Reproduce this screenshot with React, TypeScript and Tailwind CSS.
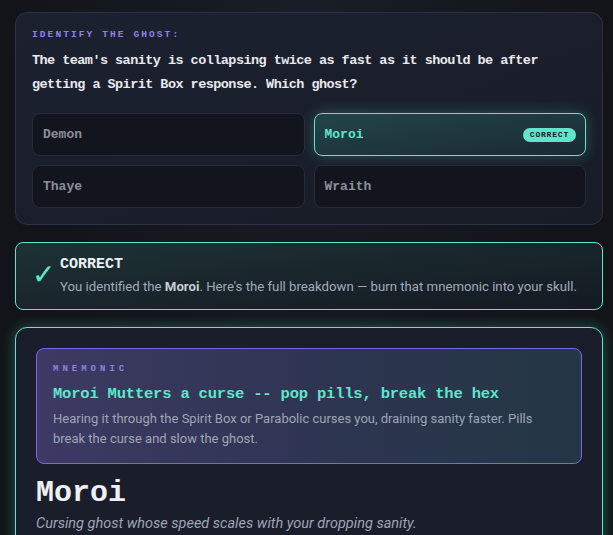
const typewriter = { fontFamily: '"Liberation Mono", "DejaVu Sans Mono", monospace' };
const sans = { fontFamily: 'Roboto, "Noto Sans", sans-serif' };

const options = [
  { name: 'Demon', correct: false },
  { name: 'Moroi', correct: true },
  { name: 'Thaye', correct: false },
  { name: 'Wraith', correct: false },
];

export default function App() {
  return (
    <div
      className="h-screen overflow-hidden bg-[radial-gradient(ellipse_at_top,#1a1d27_0%,#121419_70%)] pl-[15px] pr-[10px] pt-3 pb-6 flex flex-col gap-[17px]"
      style={sans}
    >
      {/* question card */}
      <div className="shrink-0 rounded-xl border border-[#2c3245] bg-gradient-to-br from-[#1c2130] to-[#181c26] px-4 pt-4 pb-4">
        <div
          className="text-[9.5px] font-bold tracking-[2.1px] uppercase text-[#8f80e8] leading-3"
          style={typewriter}
        >
          Identify the ghost:
        </div>
        <p
          className="mt-2 text-[13.5px] font-bold leading-6 tracking-[-0.55px] text-[#e9e9ee]"
          style={typewriter}
        >
          The team's sanity is collapsing twice as fast as it should be after getting a Spirit Box response. Which ghost?
        </p>
        <div className="mt-4 grid grid-cols-2 gap-[9px]">
          {options.map((o) =>
            o.correct ? (
              <div
                key={o.name}
                className="h-[43px] rounded-lg border border-[#5ee6cb] bg-gradient-to-br from-[#24444a] to-[#1a2a33] shadow-[0_0_14px_rgba(94,230,203,0.28)] flex items-center justify-between pl-[10px] pr-[9px]"
              >
                <span className="text-[13px] font-bold text-[#5ee6cb]" style={typewriter}>
                  {o.name}
                </span>
                <span
                  className="rounded-full bg-[#5ee6cb] px-[7px] py-[2px] text-[8px] font-bold tracking-[0.8px] text-[#10221f] leading-[10px]"
                  style={typewriter}
                >
                  CORRECT
                </span>
              </div>
            ) : (
              <div
                key={o.name}
                className="h-[43px] rounded-lg border border-[#262b3a] bg-[#12151d] flex items-center px-[10px]"
              >
                <span className="text-[13px] font-bold text-[#8b8f99]" style={typewriter}>
                  {o.name}
                </span>
              </div>
            )
          )}
        </div>
      </div>

      {/* result banner */}
      <div className="shrink-0 rounded-lg border border-[#5ee6cb] bg-gradient-to-br from-[#1d3236] to-[#141a22] pl-4 pr-3 pt-[12px] pb-[12px] flex items-start gap-[5px]">
        <span className="text-[28px] leading-none text-[#5ee6cb] mt-[6px]">✓</span>
        <div>
          <div className="text-[15px] font-bold text-[#eef0f4] leading-5" style={typewriter}>
            CORRECT
          </div>
          <div className="mt-[2px] text-[13.2px] text-[#a3aabb] leading-5 whitespace-nowrap">
            You identified the <b className="text-[#c8ccd6]">Moroi</b>. Here's the full breakdown — burn that mnemonic into your skull.
          </div>
        </div>
      </div>

      {/* ghost detail */}
      <div className="shrink-0 rounded-xl border border-[#5ee6cb] bg-[#1a1e2b] shadow-[0_0_14px_rgba(94,230,203,0.3)] px-5 pt-5 pb-6">
        <div className="rounded-lg border border-[#7a66ea] bg-gradient-to-r from-[#3d3a63] via-[#2e3552] to-[#233744] px-4 pt-[14px] pb-[14px]">
          <div
            className="text-[9px] font-bold tracking-[4px] text-[#8f80e8] leading-3"
            style={typewriter}
          >
            MNEMONIC
          </div>
          <div
            className="mt-[7px] text-[15.5px] font-bold text-[#5ee6cb] leading-6 tracking-[-0.2px]"
            style={typewriter}
          >
            Moroi Mutters a curse -- pop pills, break the hex
          </div>
          <p className="mt-[3px] text-[13px] leading-5 text-[#9ea5b5]">
            Hearing it through the Spirit Box or Parabolic curses you, draining sanity faster. Pills break the curse and slow the ghost.
          </p>
        </div>
        <h1
          className="mt-[11px] text-[30px] font-bold leading-9 text-[#eef0f4]"
          style={typewriter}
        >
          Moroi
        </h1>
        <p className="mt-[3px] text-[14.5px] italic text-[#9ea5b5] leading-5">
          Cursing ghost whose speed scales with your dropping sanity.
        </p>
      </div>
    </div>
  );
}
